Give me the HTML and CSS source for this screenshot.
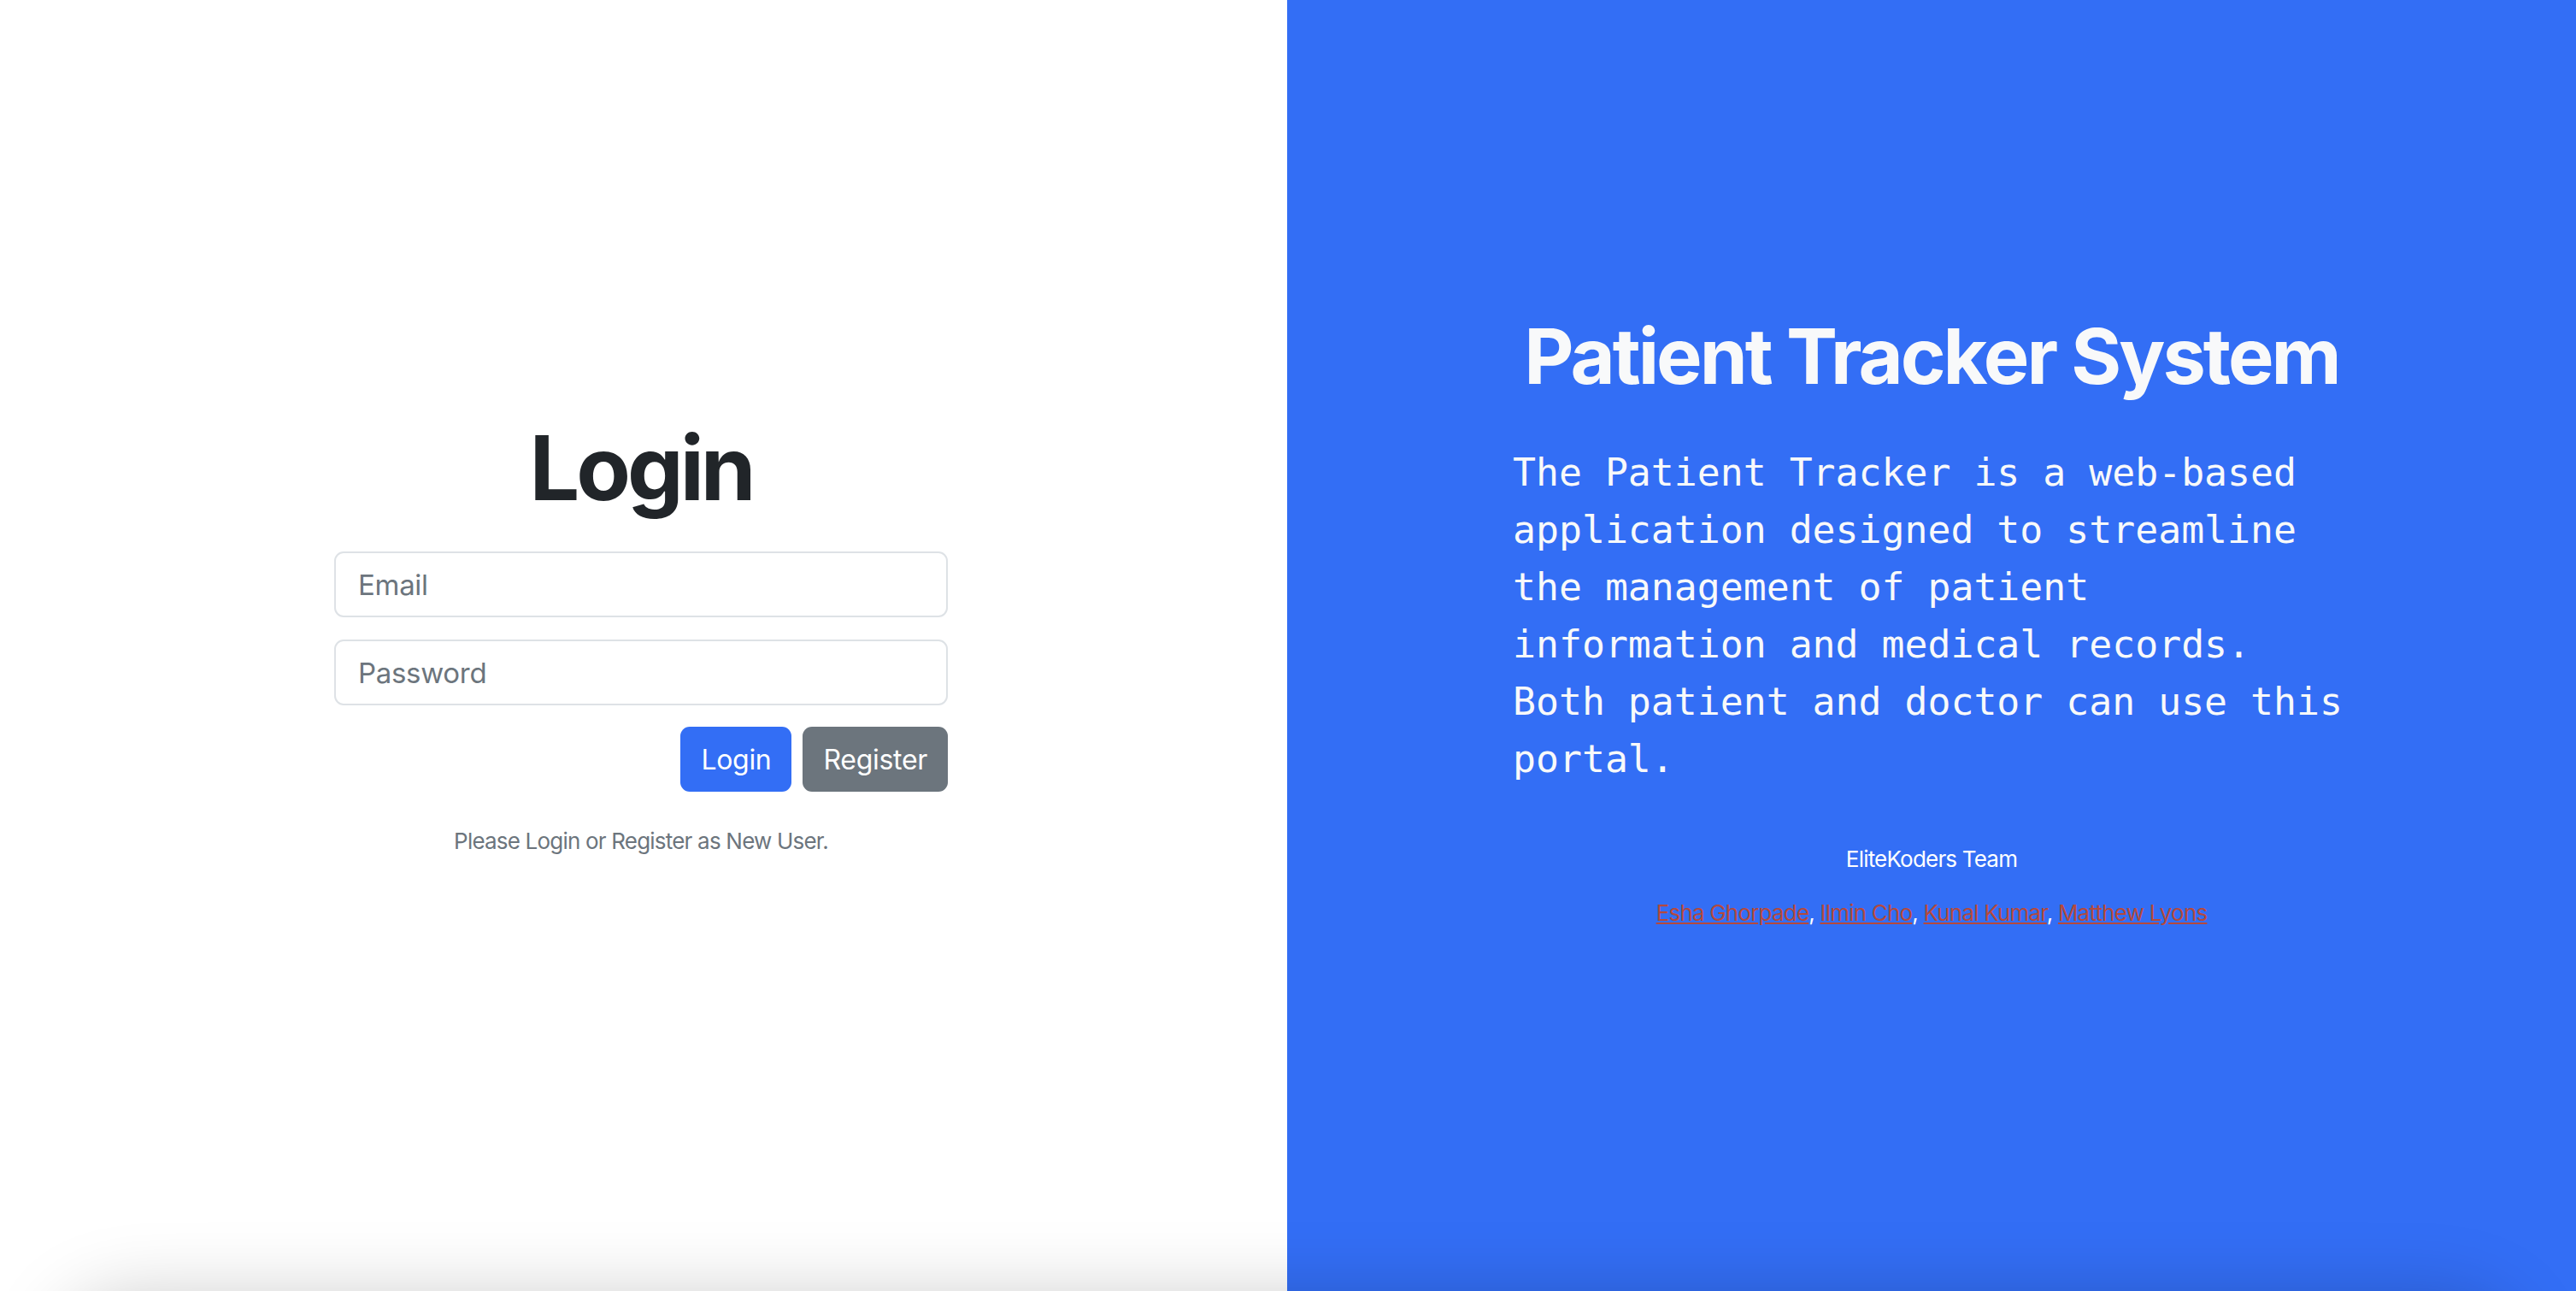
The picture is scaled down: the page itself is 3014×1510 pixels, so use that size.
FILE: index.html
```html
<!DOCTYPE html>
<html lang="en">
<head>
<meta charset="utf-8">
<title>Patient Tracker - Login</title>
<link rel="stylesheet" href="styles.css">
</head>
<body>
<div class="page">
  <section class="panel panel-login">
    <div class="login-box">
      <h1 class="login-title">Login</h1>
      <form class="login-form">
        <input class="field" type="email" placeholder="Email">
        <input class="field" type="password" placeholder="Password">
        <div class="actions">
          <button type="button" class="btn btn-primary">Login</button>
          <button type="button" class="btn btn-secondary">Register</button>
        </div>
      </form>
      <p class="hint">Please Login or Register as New User.</p>
    </div>
  </section>
  <section class="panel panel-info">
    <h2 class="info-title">Patient Tracker System</h2>
    <p class="info-text">The Patient Tracker is a web-based application designed to streamline the management of patient information and medical records. Both patient and doctor can use this portal.</p>
    <p class="team">EliteKoders Team</p>
    <p class="members"><a href="#">Esha Ghorpade</a>, <a href="#">Ilmin Cho</a>, <a href="#">Kunal Kumar</a>, <a href="#">Matthew Lyons</a></p>
  </section>
  <div class="bottom-shadow"></div>
</div>
</body>
</html>
```

FILE: styles.css
```css
* { box-sizing: border-box; }

html, body {
  margin: 0;
  padding: 0;
  height: 100%;
}

body {
  font-family: Inter, "Noto Sans", "Liberation Sans", sans-serif;
  background: #ffffff;
  color: #212529;
}

.page {
  position: relative;
  display: grid;
  grid-template-columns: 1506px 1fr;
  height: 100vh;
  overflow: hidden;
}

.panel {
  display: flex;
  flex-direction: column;
  align-items: center;
  justify-content: center;
}

.panel-login {
  background: #ffffff;
  padding-right: 6px;
}

.login-box {
  width: 718px;
  display: flex;
  flex-direction: column;
  align-items: stretch;
  margin-bottom: 22px;
}

.login-title {
  margin: 0 0 36px;
  font-size: 104px;
  line-height: 1.2;
  font-weight: 700;
  letter-spacing: -4px;
  text-align: center;
  color: #212529;
}

.login-form {
  display: flex;
  flex-direction: column;
  gap: 26px;
}

.field {
  height: 77px;
  padding: 0 26px;
  font-family: inherit;
  font-size: 33px;
  letter-spacing: -0.3px;
  color: #212529;
  background: #fff;
  border: 2px solid #dee2e6;
  border-radius: 11px;
  outline: none;
}

.field::placeholder {
  color: #6c757d;
  opacity: 1;
}

.actions {
  display: flex;
  justify-content: flex-end;
  gap: 13px;
  margin-top: -1px;
}

.btn {
  height: 76px;
  padding: 0 24px;
  font-family: inherit;
  font-size: 32px;
  letter-spacing: -0.3px;
  color: #fff;
  border: none;
  border-radius: 11px;
  cursor: pointer;
}

.btn-primary { background: #336ef5; }
.btn-secondary { background: #6c757d; }

.hint {
  margin: 38px 0 0;
  font-size: 26px;
  line-height: 1.5;
  letter-spacing: -0.8px;
  color: #6c757d;
  text-align: center;
}

.panel-info {
  background: #336ef5;
  color: #f8f9fa;
  text-align: center;
  padding-bottom: 60px;
}

.info-title {
  margin: 0 0 48px;
  font-size: 90px;
  line-height: 1.2;
  font-weight: 700;
  letter-spacing: -3px;
  color: #f8f9fa;
}

.info-text {
  width: 980px;
  margin: 0 0 64px;
  font-family: "DejaVu Sans Mono", "Liberation Mono", monospace;
  font-size: 44.8px;
  line-height: 67px;
  text-align: left;
  color: #f8f9fa;
}

.team {
  margin: 0 0 24px;
  font-size: 26px;
  line-height: 1.5;
  letter-spacing: -0.8px;
  color: #ffffff;
}

.members {
  margin: 0;
  font-size: 26px;
  line-height: 1.5;
  letter-spacing: -0.8px;
  color: #ffffff;
}

.members a {
  color: #b5493c;
  text-decoration: underline;
}

.bottom-shadow {
  position: absolute;
  left: 90px;
  right: 90px;
  top: calc(100% + 30px);
  height: 200px;
  border-radius: 60px;
  box-shadow: 0 0 90px 20px rgba(0, 0, 0, 0.22);
  pointer-events: none;
}
```
